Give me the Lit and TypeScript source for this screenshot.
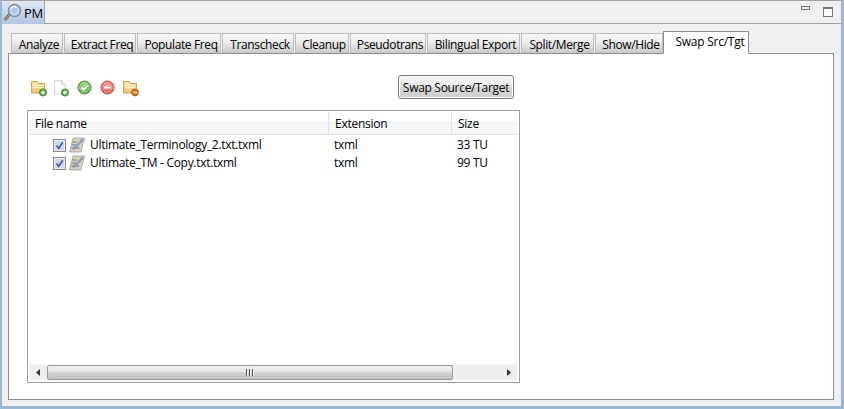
import { LitElement, html, css, svg } from "lit";
import { customElement } from "lit/decorators.js";

const TABS: [string, number, number][] = [
  ["Analyze", 52, 1], ["Extract Freq", 72, 1], ["Populate Freq", 84, 1], ["Transcheck", 72, 1],
  ["Cleanup", 54, 1], ["Pseudotrans", 76, 1], ["Bilingual Export", 93, 1], ["Split/Merge", 73, 1], ["Show/Hide", 68, 0],
];

const defs = svg`<defs>
  <linearGradient id="fold" x1="0" y1="0" x2="0" y2="1"><stop offset="0" stop-color="#fbe6a8"/><stop offset="1" stop-color="#eec46e"/></linearGradient>
  <radialGradient id="grn" cx=".5" cy=".35" r=".7"><stop offset="0" stop-color="#a6dc8c"/><stop offset="1" stop-color="#4f9f3a"/></radialGradient>
  <radialGradient id="red" cx=".5" cy=".35" r=".7"><stop offset="0" stop-color="#f6a09a"/><stop offset="1" stop-color="#d9483f"/></radialGradient>
</defs>`;

const plus = (c: string, d: string) => svg`<circle cx="12" cy="12.5" r="3.6" fill="${c}" stroke="${d}" stroke-width=".8"/><path d="M10 12.5h4M12 10.5v4" stroke="#fff" stroke-width="1.3"/>`;
const minus = svg`<circle cx="12" cy="12.5" r="3.4" fill="#ea6a12" stroke="#b84c08" stroke-width=".8"/><path d="M10 12.5h4" stroke="#fff" stroke-width="1.5"/>`;
const folder = svg`<path d="M.5 3V1.5h6l1 2h6V13H.5z" fill="url(#fold)" stroke="#c9a14f"/><path d="M2 5.5h10M2 7.5h10" stroke="#fff6d6"/>`;

const ICONS = [
  svg`${defs}${folder}${plus("#5cab3e", "#3d7f2a")}`,
  svg`<path d="M.5.5h7l4 4V14h-11z" fill="#fff" stroke="#cfcfcf"/><path d="M7.5.5v4h4" fill="#ececec" stroke="#cfcfcf"/><g transform="translate(-1 0)">${plus("#5cab3e", "#3d7f2a")}</g>`,
  svg`<circle cx="7.5" cy="7.5" r="6.5" fill="url(#grn)" stroke="#4a9636"/><circle cx="7.5" cy="7.5" r="4.8" fill="none" stroke="#b8e4a6" stroke-width=".7"/><path d="M4.5 7.5l2.2 2.2 4-4" fill="none" stroke="#fff" stroke-width="1.8"/>`,
  svg`<circle cx="7.5" cy="7.5" r="6.5" fill="url(#red)" stroke="#c9504c"/><circle cx="7.5" cy="7.5" r="4.8" fill="none" stroke="#f8bdb9" stroke-width=".7"/><path d="M4 7.5h7" stroke="#fff" stroke-width="2"/>`,
  svg`${folder}${minus}`,
];

const ROWS = [
  ["Ultimate_Terminology_2.txt.txml", "txml", "33 TU"],
  ["Ultimate_TM - Copy.txt.txml", "txml", "99 TU"],
];

@customElement("app-root")
export class AppRoot extends LitElement {
  static styles = css`
    :host { display: block; width: 844px; height: 409px; font: 12px "Open Sans", "Noto Sans", sans-serif; color: #000; overflow: hidden; }
    * { box-sizing: border-box; }
    .frame { height: 409px; background: #f0f0f0; border: solid #9db6d2; border-width: 0 3px 3px 2px; display: flex; flex-direction: column; }
    .title { height: 24px; flex: none; display: flex; align-items: flex-start; border-top: 1px solid #a0a0a0; border-bottom: 1px solid #a0a0a0; }
    .ptab { width: 43px; height: 23px; background: linear-gradient(#dfe9f4, #aec6df); border-right: 1px solid #a0a0a0; display: flex; align-items: center; gap: 2px; padding-left: 1px; margin-bottom: -1px; font-size: 13px; letter-spacing: -.2px; }
    .ptab svg { width: 19px; height: 19px; flex: none; }
    .winbtns { margin-left: auto; display: flex; align-items: flex-start; gap: 13px; padding: 5px 8px 0 0; }
    .min { width: 9px; height: 4px; border: 1px solid #777; background: #eee; }
    .max { width: 10px; height: 10px; border: 1px solid #777; border-top-width: 2px; background: #f8f8f8; margin-top: 1px; }
    .body { flex: 1; display: flex; flex-direction: column; padding: 7px 7px 6px 6px; min-height: 0; }
    .tabs { display: flex; align-items: flex-end; height: 23px; flex: none; padding-left: 3px; position: relative; z-index: 1; margin-bottom: -1px; }
    .tab { height: 21px; flex: none; border: 1px solid #bdbdbd; border-bottom: 1px solid #8d8d8d; background: linear-gradient(#fafafa 0%, #ececec 45%, #c9c9c9 100%); padding-left: 4px; text-align: center; line-height: 21px; white-space: nowrap; overflow: hidden; letter-spacing: -.38px; }
    .tab.active { height: 23px; background: #fff; border: 1px solid #8d8d8d; border-bottom: 1px solid #fff; padding-left: 8px; letter-spacing: -.25px; line-height: 20px; }
    .content { flex: 1; background: #fff; border: 1px solid #8d8d8d; padding: 21px 313px 16px 18px; display: flex; flex-direction: column; min-height: 0; }
    .bar { display: flex; height: 24px; flex: none; align-items: center; margin-bottom: 11px; padding-left: 4px; gap: 8px; }
    .bar svg { width: 15px; height: 15px; flex: none; overflow: visible; }
    .btn { margin-left: auto; margin-right: 6px; width: 116px; height: 24px; border: 1px solid #7a7a7a; border-radius: 3px; background: linear-gradient(#f4f4f4 0%, #ececec 48%, #d6d6d6 52%, #cfcfcf 100%); font: inherit; color: inherit; padding: 0; letter-spacing: -.3px; box-shadow: inset 0 0 0 1px #fbfbfb; white-space: nowrap; }
    .table { flex: 1; border: 1px solid #a0a0a0; display: flex; flex-direction: column; min-height: 0; padding: 1px; }
    .row, .head { display: grid; grid-template-columns: 300px 123px 1fr; }
    .head { height: 23px; flex: none; background: linear-gradient(#fff 40%, #f4f6f8 45%, #f4f6f8 100%); border-bottom: 1px solid #dfe3e8; margin-bottom: 1px; }
    .head > div { padding-left: 6px; line-height: 23px; border-right: 1px solid #e2e2e2; letter-spacing: -.25px; }
    .head > div:last-child { border-right: 0; }
    .rows { flex: 1; min-height: 0; }
    .row { height: 18px; align-items: center; line-height: 18px; letter-spacing: -.3px; }
    .name { display: flex; align-items: center; padding-left: 24px; gap: 3px; white-space: nowrap; }
    .row > div:not(.name) { padding-left: 5px; }
    .check { width: 13px; height: 13px; flex: none; }
    .doc { width: 16px; height: 16px; flex: none; margin-right: 2px; }
    .scroll { height: 17px; flex: none; display: flex; background: #efefef; border: 1px solid #f6f6f6; align-items: center; }
    .arrow { width: 17px; height: 15px; flex: none; display: flex; align-items: center; justify-content: center; }
    .arrow svg { width: 5px; height: 7px; }
    .thumb { width: 406px; height: 15px; flex: none; border: 1px solid #9a9a9a; border-radius: 2px; background: linear-gradient(#f2f2f2 0%, #e6e6e6 40%, #cfcfcf 55%, #c4c4c4 100%); display: flex; align-items: center; justify-content: center; gap: 1px; }
    .thumb i { width: 1px; height: 7px; background: #555; box-shadow: 1px 0 0 #eee; margin-right: 1px; }
    .spacer { flex: 1; }
  `;

  render() {
    return html`<div class="frame">
      <div class="title">
        <div class="ptab">
          <svg viewBox="0 0 19 19"><path d="M7 11l-5.5 6" stroke="#6f6a60" stroke-width="3"/><path d="M7 11l-5.5 6" stroke="#c9b48a" stroke-width="1"/><circle cx="11.5" cy="7.5" r="6" fill="#c4d8ee" stroke="#7a8a9e" stroke-width="1.5"/><path d="M8 5.5a4 4 0 0 1 5-1.5" fill="none" stroke="#f6f9fc" stroke-width="1.5"/><circle cx="11.5" cy="7.5" r="3" fill="#9dbbdb" opacity=".6"/></svg>
          <span>PM</span>
        </div>
        <div class="winbtns"><div class="min"></div><div class="max"></div></div>
      </div>
      <div class="body">
        <div class="tabs">
          ${TABS.map(([t, w, gap]) => html`<div class="tab" style="width:${w}px;margin-right:${gap}px">${t}</div>`)}
          <div class="tab active" style="width:86px">Swap Src/Tgt</div>
        </div>
        <div class="content">
          <div class="bar">
            ${ICONS.map((i) => html`<svg viewBox="0 0 15 15">${i}</svg>`)}
            <button class="btn">Swap Source/Target</button>
          </div>
          <div class="table">
            <div class="head"><div>File name</div><div>Extension</div><div>Size</div></div>
            <div class="rows">
              ${ROWS.map((r) => html`<div class="row">
                <div class="name">
                  <svg class="check" viewBox="0 0 13 13"><rect x=".5" y=".5" width="12" height="12" fill="#e9edf3" stroke="#8b8b8b"/><rect x="2" y="2" width="9" height="9" fill="#cfd8e8"/><path d="M3.5 6.5l2.2 2.8 4-6" fill="none" stroke="#3d5ea8" stroke-width="1.6"/></svg>
                  <svg class="doc" viewBox="0 0 16 16"><path d="M4 1h11.5l-3.5 14H.5z" fill="#d8d0c0" stroke="#9a9486" stroke-width=".7"/><path d="M3.6 5h4M3 8h4M2.4 11h8" stroke="#6f6a60" stroke-width=".9"/><path d="M4 12.5L14 2.5" stroke="#6a8cbc" stroke-width="2.2"/><path d="M4 12.5L14 2.5" stroke="#c4d6ec" stroke-width=".6"/></svg>
                  <span>${r[0]}</span>
                </div>
                <div>${r[1]}</div><div>${r[2]}</div>
              </div>`)}
            </div>
            <div class="scroll">
              <div class="arrow"><svg viewBox="0 0 5 7"><path d="M4 0v7L0 3.5z" fill="#333"/></svg></div>
              <div class="thumb"><i></i><i></i><i></i></div>
              <div class="spacer"></div>
              <div class="arrow"><svg viewBox="0 0 5 7"><path d="M1 0v7l4-3.5z" fill="#333"/></svg></div>
            </div>
          </div>
        </div>
      </div>
    </div>`;
  }
}
